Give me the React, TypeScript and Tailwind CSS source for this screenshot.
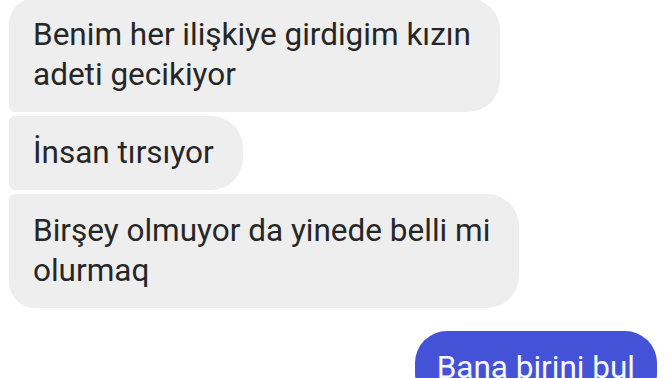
const incoming = [
  {
    lines: ["Benim her ilişkiye girdigim kızın", "adeti gecikiyor"],
    shape: "rounded-tl-[26px] rounded-bl-[6px]",
  },
  {
    lines: ["İnsan tırsıyor"],
    shape: "rounded-tl-[6px] rounded-bl-[6px]",
  },
  {
    lines: ["Birşey olmuyor da yinede belli mi", "olurmaq"],
    shape: "rounded-tl-[6px] rounded-bl-[26px]",
  },
];

export default function App() {
  return (
    <div
      className="w-[672px] h-[378px] overflow-hidden bg-white flex flex-col px-[9px]"
      style={{ fontFamily: "Roboto, 'Noto Sans', sans-serif" }}
    >
      <div className="flex flex-col gap-1 -mt-[2px]">
        {incoming.map((msg, i) => (
          <div
            key={i}
            className={`w-fit bg-[#eeeeee] text-[#262626] text-[31.5px] leading-[40px] pl-6 pr-[29px] py-[17px] rounded-r-[32px] ${msg.shape}`}
          >
            {msg.lines.map((line, j) => (
              <div key={j} className="whitespace-nowrap">
                {line}
              </div>
            ))}
          </div>
        ))}
      </div>
      <div className="self-end mr-[6px] mt-[23px] bg-[#4452d8] text-[#f7f8ff] text-[31.5px] leading-[40px] pl-[22px] pr-[22px] py-[17px] rounded-[32px]">
        Bana birini bul
      </div>
    </div>
  );
}
